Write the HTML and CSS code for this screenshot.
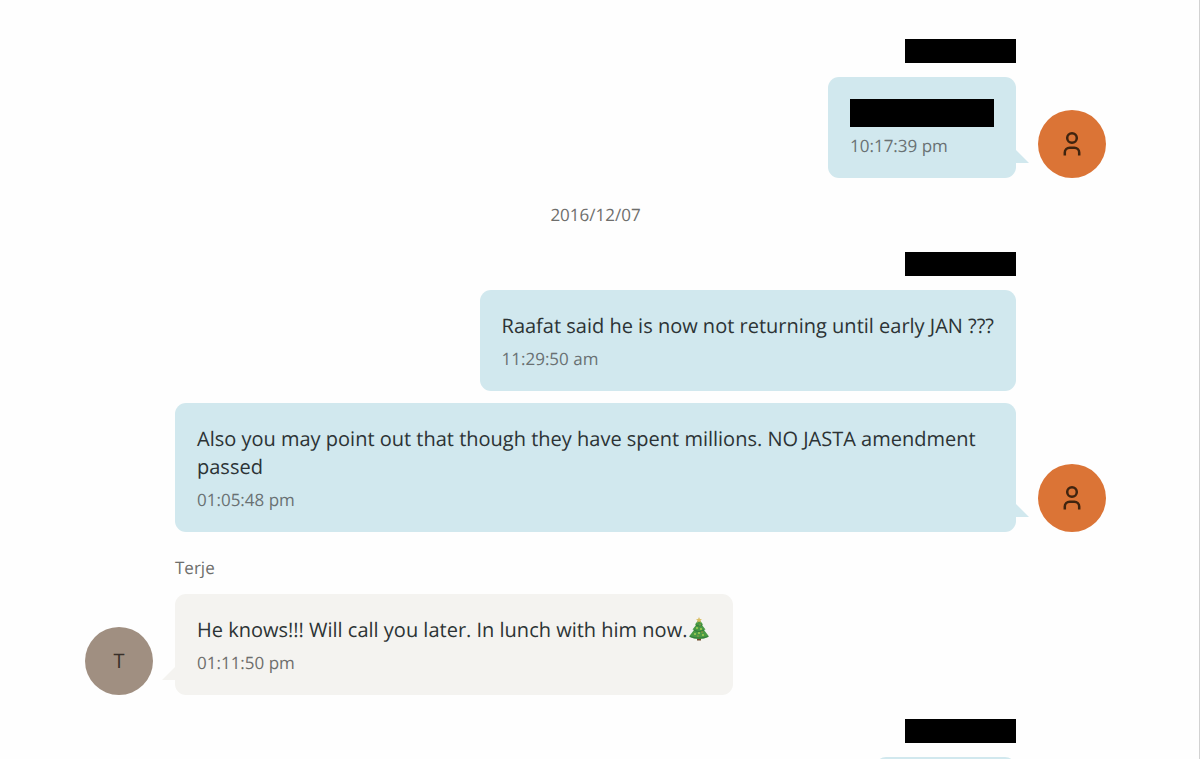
FILE: index.html
```html
<!DOCTYPE html>
<html lang="en">
<head>
<meta charset="utf-8">
<meta name="viewport" content="width=device-width, initial-scale=1">
<title>Chat</title>
<link rel="stylesheet" href="styles.css">
</head>
<body>
<main class="chat">
  <section class="group sent">
    <div class="sender"><span class="redacted"></span></div>
    <article class="bubble tail">
      <p class="message"><span class="redacted redacted-message"></span></p>
      <time class="time">10:17:39 pm</time>
    </article>
    <div class="avatar">
      <svg class="person" viewBox="0 0 20 26" aria-hidden="true"><circle cx="10" cy="7" r="4.800"/><path d="M2.800 24.600V21.500a4.800 4.800 0 0 1 4.800-4.800h4.800a4.800 4.800 0 0 1 4.800 4.800v3.100"/></svg>
    </div>
  </section>

  <time class="date">2016/12/07</time>

  <section class="group sent">
    <div class="sender"><span class="redacted"></span></div>
    <article class="bubble">
      <p class="message">Raafat said he is now not returning until early JAN ???</p>
      <time class="time">11:29:50 am</time>
    </article>
    <article class="bubble tail">
      <p class="message">Also you may point out that though they have spent millions. NO JASTA amendment passed</p>
      <time class="time">01:05:48 pm</time>
    </article>
    <div class="avatar">
      <svg class="person" viewBox="0 0 20 26" aria-hidden="true"><circle cx="10" cy="7" r="4.800"/><path d="M2.800 24.600V21.500a4.800 4.800 0 0 1 4.800-4.800h4.800a4.800 4.800 0 0 1 4.800 4.800v3.100"/></svg>
    </div>
  </section>

  <section class="group received">
    <div class="sender">Terje</div>
    <article class="bubble tail">
      <p class="message">He knows!!! Will call you later. In lunch with him now.<svg class="tree" viewBox="0 0 24 24" role="img" aria-label="Christmas tree"><path fill="#70482b" d="M10 19h4v4.500h-4z"/><path fill="#4a9a45" d="M12 2 8 7.500l1 .5-3.500 4.500 1.500.5-5 6.500q4.500 2.500 10 2.500t10-2.500l-5-6.500 1.500-.5L15 8l1-.5z"/><path fill="none" stroke="#34803a" stroke-width="1.200" d="M7 13q5 3 10 0M9 8q3 2 6 0M3 19.500q9 3 18 0"/><path fill="#d9bd62" d="m12 0 .9 2 2.100.2-1.600 1.400.5 2.100L12 4.600l-1.900 1.100.5-2.100L9 2.200l2.100-.2z"/><g fill="#a5cf55"><circle cx="10" cy="11" r="1"/><circle cx="14" cy="12" r="1"/><circle cx="8" cy="17" r="1"/><circle cx="16" cy="18" r="1"/><circle cx="12" cy="16" r="1"/></g><g fill="#b99045"><circle cx="13" cy="8" r=".7"/><circle cx="11" cy="19" r=".7"/><circle cx="15" cy="15" r=".7"/></g></svg></p>
      <time class="time">01:11:50 pm</time>
    </article>
    <div class="avatar">T</div>
  </section>

  <section class="group sent">
    <div class="sender"><span class="redacted"></span></div>
    <article class="bubble"><p class="message"><span class="redacted redacted-short"></span></p></article>
  </section>
</main>
</body>
</html>
```
FILE: styles.css
```css
* {
  box-sizing: border-box;
}

body {
  margin: 0;
  background: #fefefe;
  color: #2c3335;
  font-family: "Open Sans", "Noto Sans", sans-serif;
  font-size: 20px;
  line-height: 28px;
  text-rendering: geometricPrecision;
}

.chat {
  display: flex;
  flex-direction: column;
  gap: 24px;
  height: 100vh;
  overflow: hidden;
  padding: 39px 93px 0 85px;
  border-right: 1px solid #d2d2d2;
}

.group {
  display: grid;
  flex: none;
  grid-template-columns: 68px minmax(0, 1fr) 68px;
  column-gap: 22px;
  row-gap: 12px;
}

.sender {
  grid-column: 2;
  height: 26px;
  color: #6e6e6c;
  font-size: 17px;
  line-height: 24px;
}

.bubble {
  position: relative;
  grid-column: 2;
  justify-self: start;
  padding: 22px 22px 20px;
  border-radius: 11px;
  background: #f4f3f0;
}

.sent .sender,
.sent .bubble {
  justify-self: end;
}

.sent .bubble {
  background: #d1e8ee;
}

.tail::after {
  content: "";
  position: absolute;
  right: 100%;
  bottom: 15px;
  width: 13px;
  height: 13px;
  background: inherit;
  clip-path: polygon(100% 0, 100% 100%, 0 100%);
}

.sent .tail::after {
  right: auto;
  left: 100%;
  clip-path: polygon(0 0, 100% 100%, 0 100%);
}

.message {
  margin: 0;
}

.time {
  display: block;
  padding-top: 7px;
  color: #697173;
  font-size: 17px;
  line-height: 24px;
}

.received .time {
  color: #6e6e6c;
}

.date {
  flex: none;
  align-self: center;
  color: #6e6e6c;
  font-size: 17px;
  line-height: 26px;
}

.redacted {
  display: block;
  width: 111px;
  height: 24px;
  background: #000;
}

.redacted-message {
  width: 144px;
  height: 28px;
}

.redacted-short {
  width: 97px;
  height: 28px;
}

.avatar {
  display: grid;
  grid-column: 3;
  place-items: center;
  align-self: end;
  height: 68px;
  margin-top: -68px;
  border-radius: 50%;
  background: #db7436;
}

.tail + .avatar {
  grid-row: 2;
}

.bubble + .tail + .avatar {
  grid-row: 3;
}

.received .avatar {
  grid-column: 1;
  background: #a08f81;
  color: #382f29;
  font-size: 20px;
}

.person {
  width: 20px;
  height: 26px;
  fill: none;
  stroke: #40240f;
  stroke-width: 2.5;
}

.tree {
  width: 24px;
  height: 24px;
  vertical-align: -4px;
}
```
